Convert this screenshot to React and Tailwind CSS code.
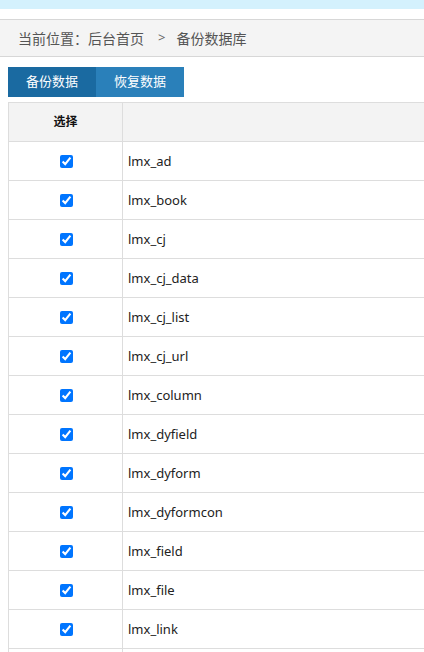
import React from "react";

const rows = [
  "lmx_ad",
  "lmx_book",
  "lmx_cj",
  "lmx_cj_data",
  "lmx_cj_list",
  "lmx_cj_url",
  "lmx_column",
  "lmx_dyfield",
  "lmx_dyform",
  "lmx_dyformcon",
  "lmx_field",
  "lmx_file",
  "lmx_link",
];

export default function App() {
  return (
    <div
      className="h-[652px] w-[424px] overflow-hidden bg-white"
      style={{ fontFamily: '"Noto Sans", "Noto Sans CJK SC", sans-serif' }}
    >
      <div className="h-[9px] bg-[#d4f1fd]" />
      <div className="h-[10px] bg-white" />
      <div className="flex h-[38px] items-center border-y border-[#d7d7d7] bg-[#f4f4f4] pl-[18px] text-[14px] text-[#555]">
        <span>当前位置：后台首页</span>
        <span className="ml-[14px] mr-[11px] text-[13px] text-[#666]">&gt;</span>
        <span>备份数据库</span>
      </div>
      <div className="ml-[8px] mt-[10px] flex h-[30px]">
        <div className="flex w-[88px] items-center justify-center bg-[#1a6aa1] text-[13px] text-white">
          备份数据
        </div>
        <div className="flex w-[88px] items-center justify-center bg-[#2a80ba] text-[13px] text-white">
          恢复数据
        </div>
      </div>
      <div className="ml-[8px] mt-[5px] w-[430px] border-l border-t border-[#dddddd]">
        <div className="flex h-[39px] border-b border-[#dddddd] bg-[#f3f3f3]">
          <div className="flex w-[114px] items-center justify-center border-r border-[#dddddd] text-[12px] font-bold text-[#111]">
            选择
          </div>
          <div className="flex-1" />
        </div>
        {rows.map((r) => (
          <div key={r} className="flex h-[39px] border-b border-[#dddddd]">
            <div className="flex w-[114px] items-center justify-center border-r border-[#dddddd]">
              <input
                type="checkbox"
                defaultChecked
                className="m-0 h-[13px] w-[13px] translate-x-[1px]"
              />
            </div>
            <div className="flex flex-1 items-center pl-[5px] pt-[2px] text-[13px] text-[#222]">
              {r}
            </div>
          </div>
        ))}
        <div className="flex h-[39px] border-b border-[#dddddd]">
          <div className="w-[114px] border-r border-[#dddddd]" />
          <div className="flex-1" />
        </div>
      </div>
    </div>
  );
}
